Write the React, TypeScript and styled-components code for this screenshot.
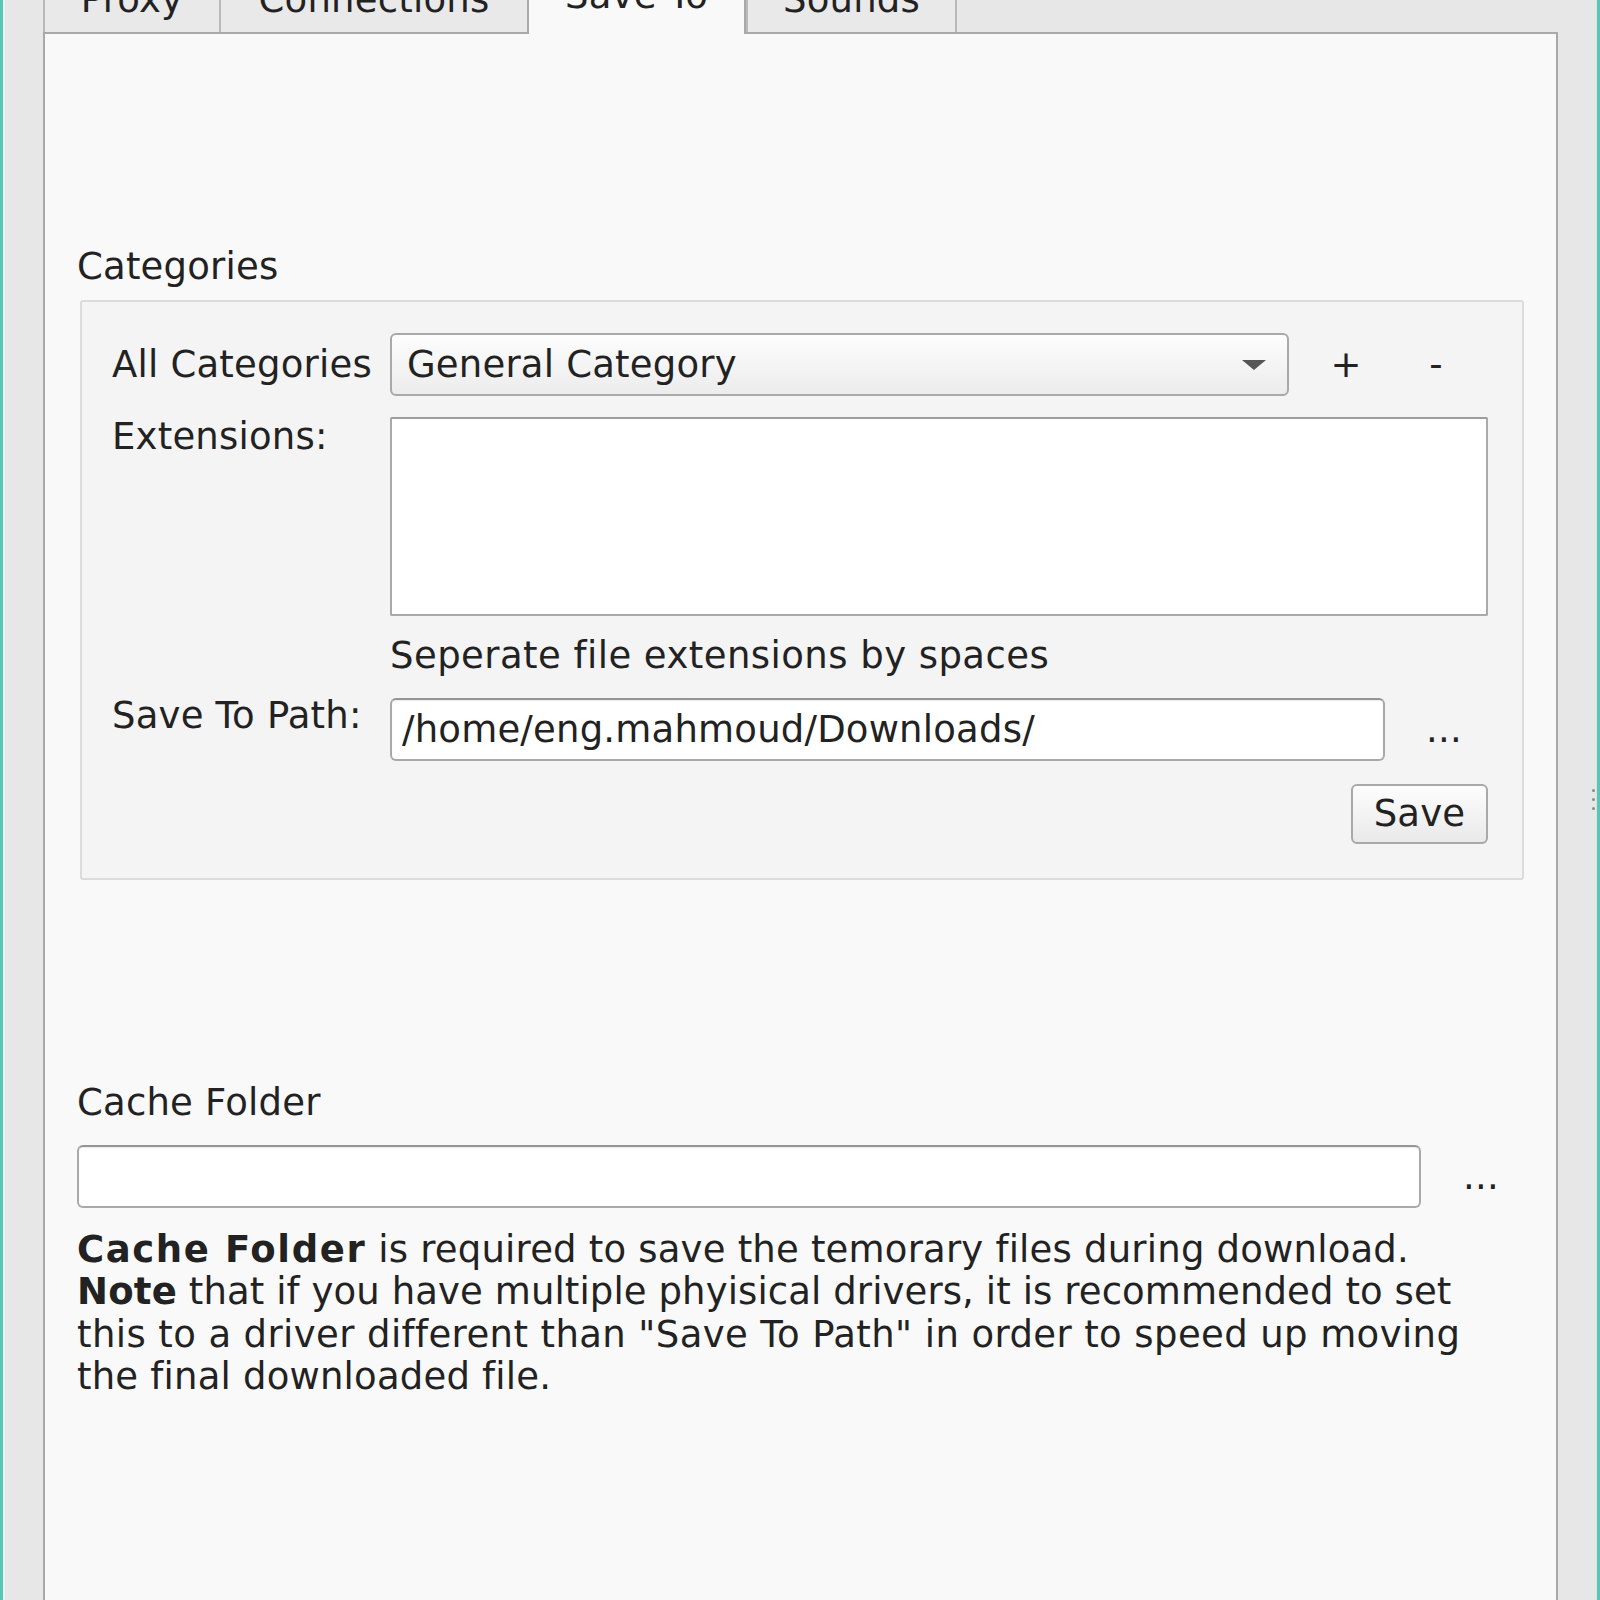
import React from "react";
import styled, { createGlobalStyle, css } from "styled-components";

const GlobalStyle = createGlobalStyle`
  html, body {
    margin: 0;
    padding: 0;
    background: #e7e7e7;
  }
  body {
    font-family: "DejaVu Sans", "Liberation Sans", sans-serif;
    font-size: 37px;
    letter-spacing: 0.2px;
    color: #222222;
  }
`;

const Window = styled.div`
  display: flex;
  width: 1600px;
  height: 1600px;
  overflow: hidden;
  background: #e7e7e7;
`;

const EdgeLine = styled.div<{ $side: "left" | "right" }>`
  flex: none;
  width: 3px;
  background: #57c6b5;
  ${(p) =>
    p.$side === "left"
      ? css`box-shadow: 2px 0 0 #eef3f2;`
      : css`box-shadow: -1px 0 0 #d9e6e3;`}
`;

const Gutter = styled.div<{ $w: number }>`
  flex: none;
  width: ${(p) => p.$w}px;
  display: flex;
  flex-direction: column;
  align-items: flex-end;
  justify-content: center;
`;

const SplitterDots = styled.div`
  display: flex;
  flex-direction: column;
  gap: 6px;
  margin: 0 2px 0 0;
  padding-bottom: 2px;
  span {
    width: 3px;
    height: 3px;
    border-radius: 50%;
    background: #8a8a8a;
  }
`;

const MainColumn = styled.div`
  flex: none;
  width: 1515px;
  display: flex;
  flex-direction: column;
`;

const TabBar = styled.div`
  flex: none;
  height: 70px;
  margin-top: -38px;
  display: flex;
  align-items: flex-end;
`;

const Tab = styled.div<{ $w: number; $selected?: boolean }>`
  flex: none;
  box-sizing: border-box;
  width: ${(p) => p.$w}px;
  display: flex;
  align-items: flex-end;
  justify-content: center;
  line-height: 42px;
  white-space: nowrap;
  ${(p) =>
    p.$selected
      ? css`
          position: relative;
          z-index: 1;
          height: 72px;
          margin-bottom: -2px;
          padding-bottom: 17px;
          background: #f9f9f9;
          border-left: 2px solid #a9a9a9;
          border-right: 2px solid #a9a9a9;
          border-top: 2px solid #a9a9a9;
          border-radius: 4px 4px 0 0;
        `
      : css`
          height: 60px;
          padding-bottom: 11px;
          background: #e9e9e9;
          border-left: 2px solid #b9b9b9;
          border-top: 2px solid #b9b9b9;
          &:last-child {
            border-right: 2px solid #b9b9b9;
          }
        `}
`;

const Panel = styled.div`
  flex: 1;
  box-sizing: border-box;
  background: #f9f9f9;
  border: 2px solid #a9a9a9;
  border-bottom: none;
  padding: 212px 31px 0 32px;
  display: flex;
  flex-direction: column;
`;

const SectionTitle = styled.div`
  line-height: 42px;
  white-space: nowrap;
`;

const GroupBox = styled.div`
  margin: 12px 1px 0 3px;
  background: #f4f4f4;
  border: 2px solid #dcdcdc;
  border-radius: 3px;
  padding: 31px 34px 34px 30px;
  display: grid;
  grid-template-columns: 258px 1fr;
  column-gap: 20px;
  row-gap: 21px;
`;

const FieldLabel = styled.div<{ $shift?: number; $center?: boolean }>`
  line-height: 42px;
  white-space: nowrap;
  align-self: ${(p) => (p.$center ? "center" : "start")};
  margin-top: ${(p) => p.$shift ?? 0}px;
`;

const ComboRow = styled.div`
  display: grid;
  grid-template-columns: 1fr 90px 90px;
  align-items: center;
  padding-right: 7px;
`;

const Combo = styled.div`
  box-sizing: border-box;
  height: 63px;
  margin-right: 12px;
  display: flex;
  align-items: center;
  justify-content: space-between;
  padding: 0 20px 0 15px;
  border: 2px solid #a9a9a9;
  border-radius: 6px;
  background: linear-gradient(#fdfdfd, #ececec);
  line-height: 42px;
  white-space: nowrap;
`;

const ToolButton = styled.div`
  text-align: center;
  line-height: 42px;
  user-select: none;
`;

const TextArea = styled.div`
  box-sizing: border-box;
  height: 199px;
  background: #ffffff;
  border: 2px solid #a9a9a9;
  border-top-color: #9c9c9c;
  border-radius: 2px;
`;

const Hint = styled.div`
  grid-column: 2;
  margin-top: -2px;
  line-height: 42px;
  white-space: nowrap;
  letter-spacing: 0.45px;
`;

const InputRow = styled.div<{ $gap: number }>`
  display: flex;
  align-items: center;
  gap: ${(p) => p.$gap}px;
`;

const LineInput = styled.div`
  flex: 1;
  box-sizing: border-box;
  height: 63px;
  background: #ffffff;
  border: 2px solid #a9a9a9;
  border-top-color: #959595;
  border-radius: 6px;
  padding: 0 10px;
  display: flex;
  align-items: center;
  line-height: 42px;
  white-space: nowrap;
  box-shadow: inset 0 1px 1px rgba(0, 0, 0, 0.08);
`;

const DotsButton = styled.div`
  flex: none;
  width: 88px;
  text-align: center;
  line-height: 42px;
  padding-top: 0;
`;

const PushButton = styled.div`
  grid-column: 2;
  justify-self: end;
  margin-top: 2px;
  box-sizing: border-box;
  width: 137px;
  height: 60px;
  display: flex;
  align-items: center;
  justify-content: center;
  border: 2px solid #a9a9a9;
  border-radius: 6px;
  background: linear-gradient(#fdfdfd, #e9e9e9);
  line-height: 42px;
`;

const Spacer = styled.div<{ $h: number }>`
  flex: none;
  height: ${(p) => p.$h}px;
`;

const CacheInputRow = styled(InputRow)`
  margin-top: 21px;
`;

const Paragraph = styled.div`
  margin-top: 21px;
  line-height: 42.3px;
  white-space: nowrap;
  b {
    font-weight: bold;
  }
`;

const Line = styled.span<{ $spacing?: number }>`
  letter-spacing: ${(p) => p.$spacing ?? 0.2}px;
`;

const WideBold = styled.b`
  letter-spacing: 1.6px;
`;

function ComboArrow() {
  return (
    <svg width="26" height="12" viewBox="0 0 26 12" aria-hidden="true">
      <polygon points="1,1 25,1 13,11" fill="#555555" />
    </svg>
  );
}

export default function App() {
  return (
    <>
      <GlobalStyle />
      <Window>
        <EdgeLine $side="left" />
        <Gutter $w={40} />
        <MainColumn>
          <TabBar>
            <Tab $w={176}>Proxy</Tab>
            <Tab $w={308}>Connections</Tab>
            <Tab $w={219} $selected>
              Save To
            </Tab>
            <Tab $w={211}>Sounds</Tab>
          </TabBar>
          <Panel>
            <SectionTitle>Categories</SectionTitle>
            <GroupBox>
              <FieldLabel $center>All Categories</FieldLabel>
              <ComboRow>
                <Combo>
                  <span>General Category</span>
                  <ComboArrow />
                </Combo>
                <ToolButton>+</ToolButton>
                <ToolButton>-</ToolButton>
              </ComboRow>

              <FieldLabel $shift={-1}>Extensions:</FieldLabel>
              <TextArea />

              <Hint>Seperate file extensions by spaces</Hint>

              <FieldLabel $shift={-3}>Save To Path:</FieldLabel>
              <InputRow $gap={15}>
                <LineInput>/home/eng.mahmoud/Downloads/</LineInput>
                <DotsButton>...</DotsButton>
              </InputRow>

              <PushButton>Save</PushButton>
            </GroupBox>

            <Spacer $h={202} />
            <SectionTitle>Cache Folder</SectionTitle>
            <CacheInputRow $gap={16}>
              <LineInput />
              <DotsButton>...</DotsButton>
            </CacheInputRow>
            <Paragraph>
              <WideBold>Cache Folder</WideBold>
              <Line> is required to save the temorary files during download.</Line>
              <br />
              <b>Note</b>
              <Line $spacing={0.1}> that if you have multiple phyisical drivers, it is recommended to set</Line>
              <br />
              <Line $spacing={0.4}>this to a driver different than "Save To Path" in order to speed up moving</Line>
              <br />
              <Line>the final downloaded file.</Line>
            </Paragraph>
          </Panel>
        </MainColumn>
        <Gutter $w={39}>
          <SplitterDots>
            <span />
            <span />
            <span />
          </SplitterDots>
        </Gutter>
        <EdgeLine $side="right" />
      </Window>
    </>
  );
}
